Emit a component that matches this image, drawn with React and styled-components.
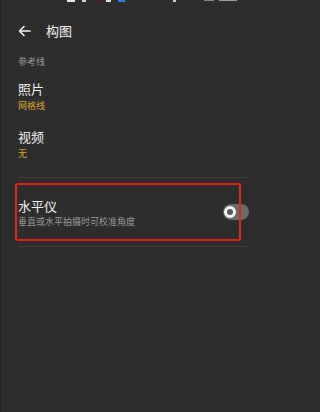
import React from 'react'
import styled, { createGlobalStyle } from 'styled-components'

const GlobalStyle = createGlobalStyle`
  html, body {
    margin: 0;
    padding: 0;
    background: #2d2d2d;
  }
  body {
    font-family: "Noto Sans CJK SC", "Noto Sans", sans-serif;
  }
`

const Page = styled.div`
  width: 266px;
  height: 412px;
  box-sizing: border-box;
  background: #2d2d2d;
  border-left: 1px solid #232323;
  overflow: hidden;
`

const StatusStrip = styled.div`
  height: 3px;
  display: flex;
  align-items: flex-start;
`

const Bit = styled.span`
  display: block;
  height: ${p => p.h || 2}px;
  width: ${p => p.w}px;
  margin-left: ${p => p.gap}px;
  background: ${p => p.c};
`

const Header = styled.div`
  display: flex;
  align-items: center;
  height: 16px;
  margin-top: 20px;
  padding: 0 17px;
`

const Title = styled.span`
  margin-left: 15px;
  font-size: 13px;
  line-height: 16px;
  color: #f2f2f2;
`

const Content = styled.div`
  padding: 0 17px;
`

const SectionLabel = styled.div`
  margin-top: 17px;
  font-size: 9px;
  line-height: 12px;
  color: #9a9a9a;
`

const Item = styled.div`
  margin-top: ${p => p.top}px;
  display: flex;
  flex-direction: column;
  gap: 3px;
`

const ItemTitle = styled.div`
  font-size: 13px;
  line-height: 16px;
  color: #f0f0f0;
`

const ItemValue = styled.div`
  font-size: 9px;
  line-height: 12px;
  color: ${p => (p.accent ? '#d8a42e' : '#9a9a9a')};
`

const Divider = styled.div`
  height: 1px;
  background: #3d3d3d;
  margin-top: ${p => p.top || 0}px;
`

const SwitchRow = styled.div`
  position: relative;
  height: 68px;
  display: flex;
  align-items: center;
  justify-content: space-between;
`

const SwitchText = styled.div`
  display: flex;
  flex-direction: column;
  gap: 2px;
  margin-top: 2px;
`

const Highlight = styled.div`
  position: absolute;
  top: 5px;
  left: -3px;
  width: 226px;
  height: 58px;
  box-sizing: border-box;
  border: 2px solid #e2231e;
  border-radius: 3px;
  pointer-events: none;
`

const Track = styled.div`
  width: 26px;
  height: 16px;
  border-radius: 8px;
  background: #6b6b6b;
  display: flex;
  align-items: center;
  padding-left: 1px;
  box-sizing: border-box;
`

const Knob = styled.div`
  width: 12px;
  height: 12px;
  border-radius: 50%;
  background: #555555;
  border: 3px solid #f4f4f4;
  box-sizing: border-box;
`

const BackArrow = () => (
  <svg width="13" height="12" viewBox="0 0 13 12">
    <path
      d="M12 6H1.5M6 1.5L1.5 6L6 10.5"
      fill="none"
      stroke="#f2f2f2"
      strokeWidth="1.6"
      strokeLinecap="round"
      strokeLinejoin="round"
    />
  </svg>
)

const App = () => (
  <Page>
    <GlobalStyle />
    <StatusStrip>
      <Bit w={8} gap={66} c="#e6e6e6" />
      <Bit w={4} gap={7} c="#d0d0d0" />
      <Bit w={6} gap={9} c="#4a1e26" />
      <Bit w={5} gap={5} c="#e0e0e0" />
      <Bit w={7} gap={7} c="#2f7fe0" />
      <Bit w={3} gap={48} c="#cfcfcf" />
      <Bit w={10} gap={28} c="#8a8a8a" h={1} />
      <Bit w={18} gap={5} c="#9a9a9a" h={1} />
    </StatusStrip>
    <Header>
      <BackArrow />
      <Title>构图</Title>
    </Header>
    <Content>
      <SectionLabel>参考线</SectionLabel>
      <Item top={13}>
        <ItemTitle>照片</ItemTitle>
        <ItemValue accent>网格线</ItemValue>
      </Item>
      <Item top={17}>
        <ItemTitle>视频</ItemTitle>
        <ItemValue accent>无</ItemValue>
      </Item>
      <Divider top={17} />
      <SwitchRow>
        <SwitchText>
          <ItemTitle>水平仪</ItemTitle>
          <ItemValue>垂直或水平拍摄时可校准角度</ItemValue>
        </SwitchText>
        <Track>
          <Knob />
        </Track>
        <Highlight />
      </SwitchRow>
      <Divider />
    </Content>
  </Page>
)

export default App
